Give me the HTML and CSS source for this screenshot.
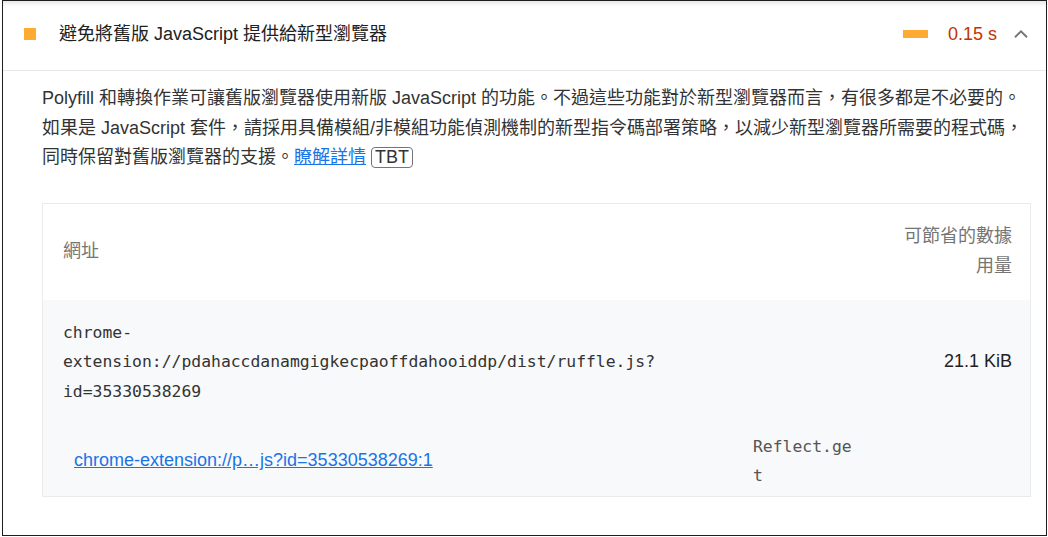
FILE: index.html
```html
<!DOCTYPE html>
<html lang="zh-Hant">
<head>
<meta charset="utf-8">
<title>Legacy JavaScript</title>
<link rel="stylesheet" href="styles.css">
</head>
<body>
<div class="frame">
  <div class="audit-head">
    <span class="icon-avg"></span>
    <span class="title">避免將舊版 JavaScript 提供給新型瀏覽器</span>
    <span class="bar"></span>
    <span class="value">0.15 s</span>
    <svg class="chev" width="14" height="8" viewBox="0 0 14 8"><polyline points="1,7.2 7,1.4 13,7.2" fill="none" stroke="#757575" stroke-width="2"/></svg>
  </div>
  <div class="audit-body">
    <p class="desc">Polyfill 和轉換作業可讓舊版瀏覽器使用新版 JavaScript 的功能。不過這些功能對於新型瀏覽器而言，有很多都是不必要的。<br>如果是 JavaScript 套件，請採用具備模組/非模組功能偵測機制的新型指令碼部署策略，以減少新型瀏覽器所需要的程式碼，<br>同時保留對舊版瀏覽器的支援。<a class="link" href="#">瞭解詳情</a> <span class="badge">TBT</span></p>
    <table class="details">
      <colgroup>
        <col class="c-url">
        <col class="c-sub">
        <col class="c-size">
      </colgroup>
      <thead>
        <tr>
          <th class="h-url">網址</th>
          <th class="h-sub"></th>
          <th class="h-size">可節省的數據用量</th>
        </tr>
      </thead>
      <tbody>
        <tr class="row-main">
          <td class="cell-url mono">chrome-extension://pdahaccdanamgigkecpaoffdahooiddp/dist/ruffle.js?id=35330538269</td>
          <td class="cell-sub"></td>
          <td class="cell-size">21.1 KiB</td>
        </tr>
        <tr class="row-subitem">
          <td class="cell-loc"><a class="link" href="#">chrome-extension://p…js?id=35330538269:1</a></td>
          <td class="cell-signal mono">Reflect.get</td>
          <td class="cell-empty"></td>
        </tr>
      </tbody>
    </table>
  </div>
</div>
</body>
</html>
```
FILE: styles.css
```css
html, body {
  margin: 0;
  padding: 0;
  background: #ffffff;
}

body {
  font-family: "Liberation Sans", "Noto Sans CJK TC", Arial, sans-serif;
  font-size: 18px;
  color: #212121;
}

.frame {
  box-sizing: border-box;
  width: 1045px;
  height: 536px;
  margin-left: 2px;
  border: 1px solid #1e1e1e;
  box-shadow: inset 0 5px 5px -3px rgba(0, 0, 0, 0.12);
  overflow: hidden;
  background: #ffffff;
}

.audit-head {
  display: flex;
  align-items: center;
  padding: 18px 18px 21px 21px;
  line-height: 30px;
  border-bottom: 1px solid #e8e8e8;
}

.icon-avg {
  width: 12px;
  height: 12px;
  background: #ffaa33;
  flex: none;
}

.title {
  flex: 1;
  margin-left: 23px;
  color: #212121;
}

.bar {
  width: 25px;
  height: 8px;
  background: #ffaa33;
  flex: none;
}

.value {
  margin-left: 20px;
  color: #c33300;
}

.chev {
  margin-left: 17px;
  flex: none;
}

.audit-body {
  padding: 13px 14px 0 39px;
}

.desc {
  margin: 0 0 30px 0;
  line-height: 29.5px;
  color: #333333;
}

.link {
  color: #1a73e8;
  text-decoration: underline;
}

.badge {
  display: inline-block;
  border: 1px solid #757575;
  border-radius: 4px;
  padding: 0 3px;
  line-height: 19px;
  color: #333333;
}

.details {
  width: 989px;
  table-layout: fixed;
  border-collapse: separate;
  border-spacing: 0;
  border: 1px solid #ebebeb;
  line-height: 29.5px;
}

.c-url { width: 700px; }
.c-sub { width: 115px; }
.c-size { width: 172px; }

.details th {
  font-weight: normal;
  color: #757575;
  padding: 18.5px 0;
  vertical-align: middle;
}

.h-url {
  text-align: left;
  padding-left: 20px !important;
}

.h-size {
  text-align: right;
  padding-left: 39px !important;
  padding-right: 18px !important;
}

.details td {
  background: #f8f9fa;
  vertical-align: middle;
  padding: 0;
}

.mono {
  font-family: "DejaVu Sans Mono", "Liberation Mono", monospace;
  font-size: 16.4px;
}

.row-main td {
  padding-top: 18px;
  padding-bottom: 18px;
}

.cell-url {
  padding-left: 20px !important;
  padding-right: 40px !important;
  color: #333333;
  word-wrap: break-word;
}

.cell-size {
  text-align: right;
  padding-left: 39px !important;
  padding-right: 18px !important;
  color: #212121;
}

.row-subitem td {
  padding-top: 7.5px;
  padding-bottom: 5px;
}

.cell-loc {
  padding-left: 31px !important;
}

.cell-signal {
  padding-left: 10px !important;
  padding-right: 5px !important;
  color: #555555;
  word-break: break-all;
}
```
